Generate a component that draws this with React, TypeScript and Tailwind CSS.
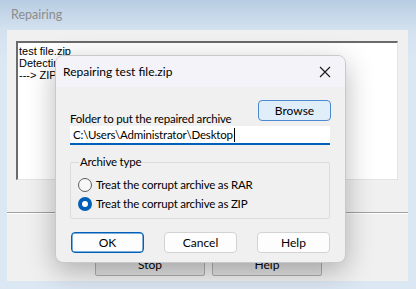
import React from "react";

const seg = { fontFamily: 'Lato, "Noto Sans", sans-serif' };
const old = { fontFamily: '"Liberation Sans", Arial, sans-serif' };

function Radio({ checked, label }: { checked: boolean; label: string }) {
  return (
    <div className="flex items-center gap-[4px] h-[19px]">
      {checked ? (
        <span className="w-[14px] h-[14px] rounded-full bg-[#005fb8] flex items-center justify-center">
          <span className="w-[6px] h-[6px] rounded-full bg-white" />
        </span>
      ) : (
        <span className="w-[14px] h-[14px] rounded-full border border-[#5c5c5c] bg-[#f7f7f7]" />
      )}
      <span className="text-[11.5px] tracking-[-0.2px] text-black leading-none whitespace-nowrap">{label}</span>
    </div>
  );
}

function DlgButton({ label, primary }: { label: string; primary?: boolean }) {
  return (
    <div
      className={
        "w-[73px] h-[21px] rounded-[4px] flex items-center justify-center text-[12px] text-black bg-[#fdfdfd] " +
        (primary ? "border border-[#005fb8] shadow-[inset_0_0_0_0.5px_#005fb8]" : "border border-[#d3d3d3]")
      }
    >
      {label}
    </div>
  );
}

export default function App() {
  return (
    <div className="relative w-[416px] h-[289px] overflow-hidden bg-[linear-gradient(to_bottom,#b8cde3_0px,#d3e1ef_30px,#dbe7f3_60px,#dbe7f3_100%)]">
      {/* outer title */}
      <div className="h-[30px] pl-[11px] flex items-center text-[12.5px] text-[#8c8c8c]" style={seg}>
        Repairing
      </div>
      {/* client area */}
      <div className="ml-[7px] w-[401px] h-[251px] bg-[#f0f0f0] flex flex-col" style={old}>
        <div className="ml-[9px] mt-[11px] w-[382px] h-[139px] bg-white border-t-2 border-l-2 border-t-[#6b6b6b] border-l-[#6b6b6b] border-r border-b border-r-[#e3e3e3] border-b-[#e3e3e3] pl-[1px] pt-[2px] text-[11px] leading-[12px] text-black">
          <div>test file.zip</div>
          <div className="w-[37px] overflow-hidden whitespace-nowrap">Detecting</div>
          <div className="w-[37px] overflow-hidden whitespace-nowrap">---&gt; ZIP</div>
        </div>
        <div className="mt-[32px] h-[1px] bg-[#a0a0a0]" />
        <div className="h-[1px] bg-white" />
        <div className="mt-[39px] ml-[88px] flex gap-[7px]">
          <div className="w-[110px] h-[23px] border border-[#adadad] rounded-[2px] bg-[#e1e1e1] flex items-center justify-center text-[12px] text-black" style={seg}>
            Stop
          </div>
          <div className="w-[110px] h-[23px] border border-[#adadad] rounded-[2px] bg-[#e1e1e1] flex items-center justify-center text-[12px] text-black" style={seg}>
            Help
          </div>
        </div>
      </div>

      {/* dialog */}
      <div
        className="absolute left-[55px] top-[55px] w-[291px] h-[208px] rounded-[8px] overflow-hidden border border-[#c9c9cc] bg-[#f0f0f0] shadow-[0_8px_28px_rgba(0,0,0,0.28)] flex flex-col"
        style={seg}
      >
        <div className="h-[31px] bg-[#f3f3f9] flex items-center pl-[7px] pr-[10px] justify-between">
          <span className="text-[12px] text-black">Repairing test file.zip</span>
          <svg width="12" height="12" viewBox="0 0 12 12" className="mr-[4px]">
            <path d="M1 1 L11 11 M11 1 L1 11" stroke="#1a1a1a" strokeWidth="1.1" fill="none" />
          </svg>
        </div>
        <div className="flex flex-col px-[14px]">
          <div className="flex items-end justify-between mt-[13px]">
            <span className="text-[11.5px] tracking-[-0.2px] text-black leading-none mb-[-3px] whitespace-nowrap">Folder to put the repaired archive</span>
            <div className="w-[73px] h-[21px] rounded-[4px] border border-[#4c8ad0] bg-[#e0eef9] flex items-center justify-center text-[12px] text-black">
              Browse
            </div>
          </div>
          <div className="mt-[5px] w-[260px] h-[19px] bg-white border-b-2 border-b-[#005fb8] flex items-center pl-[3px] text-[11.5px] tracking-[-0.2px] text-black">
            <span>C:\Users\Administrator\Desktop</span>
            <span className="w-[1px] h-[14px] bg-black ml-[1px]" />
          </div>
          <div className="relative mt-[17px] w-[260px] h-[57px] border border-[#dcdcdc] rounded-[2px] pt-[12px] pl-[7px]">
            <span className="absolute left-[8px] top-[-9px] bg-[#f0f0f0] px-[1px] text-[11.5px] tracking-[-0.2px] text-black leading-[16px]">
              Archive type
            </span>
            <Radio checked={false} label="Treat the corrupt archive as RAR" />
            <Radio checked={true} label="Treat the corrupt archive as ZIP" />
          </div>
          <div className="mt-[13px] flex justify-between w-[260px] pl-[1px]">
            <DlgButton label="OK" primary />
            <DlgButton label="Cancel" />
            <DlgButton label="Help" />
          </div>
        </div>
      </div>
    </div>
  );
}
